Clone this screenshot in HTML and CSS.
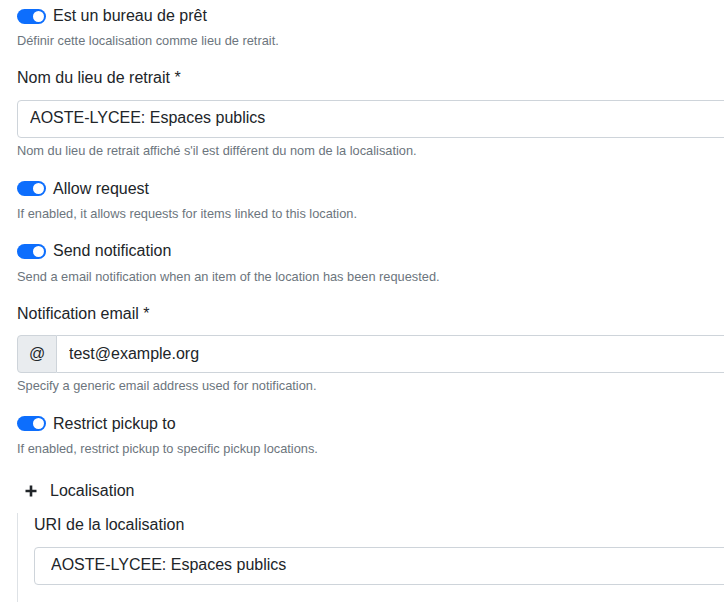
FILE: index.html
```html
<!DOCTYPE html>
<html lang="fr">
<head>
<meta charset="utf-8">
<title>Localisation</title>
<link rel="stylesheet" href="styles.css">
</head>
<body>
<div class="page">
  <div class="group">
    <label class="switch-row"><span class="switch"></span><span>Est un bureau de prêt</span></label>
    <div class="help help-first">Définir cette localisation comme lieu de retrait.</div>
  </div>
  <div class="group group-input">
    <div class="label">Nom du lieu de retrait *</div>
    <input class="control" type="text" value="AOSTE-LYCEE: Espaces publics">
    <div class="help help-input">Nom du lieu de retrait affiché s'il est différent du nom de la localisation.</div>
  </div>
  <div class="group">
    <label class="switch-row"><span class="switch"></span><span>Allow request</span></label>
    <div class="help">If enabled, it allows requests for items linked to this location.</div>
  </div>
  <div class="group">
    <label class="switch-row"><span class="switch"></span><span>Send notification</span></label>
    <div class="help">Send a email notification when an item of the location has been requested.</div>
  </div>
  <div class="group group-input">
    <div class="label label-tight">Notification email *</div>
    <div class="input-group">
      <span class="addon">@</span>
      <input class="control grouped" type="text" value="test@example.org">
    </div>
    <div class="help help-input">Specify a generic email address used for notification.</div>
  </div>
  <div class="group">
    <label class="switch-row"><span class="switch"></span><span>Restrict pickup to</span></label>
    <div class="help">If enabled, restrict pickup to specific pickup locations.</div>
  </div>
  <div class="add-row">
    <svg class="plus" width="12" height="12" viewBox="0 0 12 12"><path d="M6 0.5V11.5M0.5 6H11.5" stroke="#212529" stroke-width="2.6" fill="none"/></svg>
    <span>Localisation</span>
  </div>
  <div class="sub">
    <div class="label">URI de la localisation</div>
    <input class="control control-sub" type="text" value="AOSTE-LYCEE: Espaces publics">
  </div>
</div>
</body>
</html>
```

FILE: styles.css
```css
html, body {
  margin: 0;
  padding: 0;
  overflow: hidden;
  background: #fff;
}
body {
  font-family: "Liberation Sans", Arial, sans-serif;
  color: #212529;
  font-size: 16px;
}
.page {
  width: 1000px;
  padding: 4px 0 0 17px;
  box-sizing: border-box;
}
.group {
  margin-bottom: 16px;
}
.group-input {
  margin-bottom: 17px;
}
.switch-row {
  display: flex;
  align-items: center;
  gap: 7px;
  height: 24px;
  line-height: 24px;
}
.switch {
  position: relative;
  width: 29px;
  height: 15px;
  border-radius: 8px;
  background: #0d6efd;
  flex: none;
}
.switch::after {
  content: "";
  position: absolute;
  right: 2px;
  top: 2px;
  width: 11px;
  height: 11px;
  border-radius: 50%;
  background: #fff;
}
.help {
  font-size: 12.8px;
  line-height: 19px;
  color: #6c757d;
  margin-top: 3.5px;
}
.help-first {
  margin-top: 2.5px;
}
.help-input {
  margin-top: 2.5px;
}
.label {
  line-height: 24px;
  margin-bottom: 10.5px;
}
.label-tight {
  margin-bottom: 9.5px;
}
.control {
  display: block;
  width: 900px;
  height: 38px;
  box-sizing: border-box;
  border: 1px solid #ced4da;
  border-radius: 4px;
  padding: 0 12px 3px;
  font-family: "Liberation Sans", Arial, sans-serif;
  font-size: 16px;
  color: #212529;
  background: #fff;
  margin: 0;
  outline: none;
}
.control-sub {
  padding-left: 16px;
}
.input-group {
  display: flex;
  width: 900px;
}
.addon {
  width: 40px;
  height: 38px;
  box-sizing: border-box;
  display: flex;
  align-items: center;
  justify-content: center;
  background: #e9ecef;
  border: 1px solid #ced4da;
  border-radius: 4px 0 0 4px;
  color: #212529;
  font-size: 16px;
}
.control.grouped {
  flex: 1;
  width: auto;
  border-left: none;
  border-radius: 0 4px 4px 0;
  padding-bottom: 1px;
}
.add-row {
  display: flex;
  align-items: center;
  gap: 13px;
  padding-left: 8px;
  margin-top: 21px;
  line-height: 24px;
}
.plus {
  display: block;
}
.sub {
  margin-top: 10px;
  border-left: 1px solid #dee2e6;
  padding: 0 0 40px 16px;
}
.sub .label {
  margin-bottom: 10px;
}
```
